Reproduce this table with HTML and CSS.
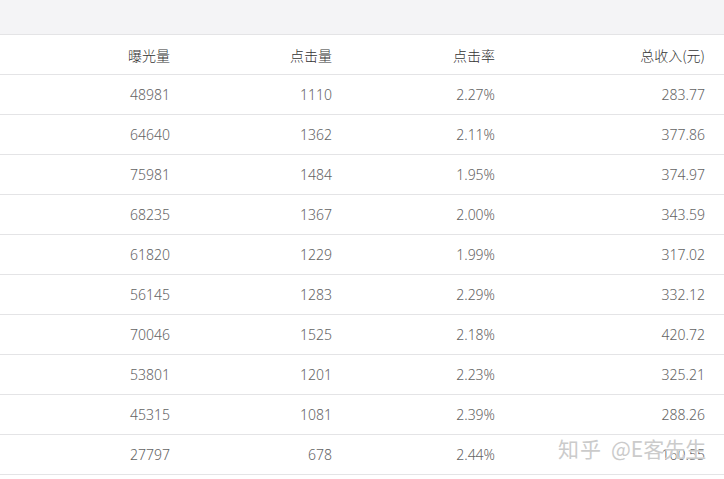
FILE: index.html
```html
<!DOCTYPE html>
<html lang="zh-CN">
<head>
<meta charset="utf-8">
<title>数据表</title>
<link rel="stylesheet" href="styles.css">
</head>
<body>
<div class="page">
  <div class="band"></div>
  <div class="table">
    <div class="row head"><span>曝光量</span><span>点击量</span><span>点击率</span><span>总收入(元)</span></div>
    <div class="row"><span>48981</span><span>1110</span><span>2.27%</span><span>283.77</span></div>
    <div class="row"><span>64640</span><span>1362</span><span>2.11%</span><span>377.86</span></div>
    <div class="row"><span>75981</span><span>1484</span><span>1.95%</span><span>374.97</span></div>
    <div class="row"><span>68235</span><span>1367</span><span>2.00%</span><span>343.59</span></div>
    <div class="row"><span>61820</span><span>1229</span><span>1.99%</span><span>317.02</span></div>
    <div class="row"><span>56145</span><span>1283</span><span>2.29%</span><span>332.12</span></div>
    <div class="row"><span>70046</span><span>1525</span><span>2.18%</span><span>420.72</span></div>
    <div class="row"><span>53801</span><span>1201</span><span>2.23%</span><span>325.21</span></div>
    <div class="row"><span>45315</span><span>1081</span><span>2.39%</span><span>288.26</span></div>
    <div class="row"><span>27797</span><span>678</span><span>2.44%</span><span>160.55</span></div>
  </div>
  <div class="watermark"><span class="wm-logo">知乎</span><span class="wm-user">@E客先生</span></div>
</div>
</body>
</html>
```

FILE: styles.css
```css
html, body {
  margin: 0;
  padding: 0;
  background: #ffffff;
}

.page {
  position: relative;
  width: 724px;
  height: 479px;
  overflow: hidden;
  font-family: "Noto Sans", "Noto Sans CJK SC", sans-serif;
  font-size: 14px;
}

.band {
  height: 34px;
  background: #f4f4f6;
  border-bottom: 1px solid #e4e4e6;
}

.row {
  display: grid;
  grid-template-columns: 170px 162px 163px 210px;
  align-items: center;
  height: 39px;
  border-bottom: 1px solid #e4e4e6;
  color: #636363;
  font-weight: 300;
}

.row span {
  text-align: right;
  white-space: nowrap;
}

.head {
  color: #333333;
  font-family: "Noto Sans CJK SC", sans-serif;
}

.watermark {
  position: absolute;
  left: 558px;
  top: 436px;
  display: flex;
  gap: 9px;
  font-family: "Noto Sans CJK SC", sans-serif;
  font-size: 21px;
  line-height: 24px;
  color: #cbcbcb;
  white-space: nowrap;
  text-shadow: 0 0 1px #ffffff;
}

.wm-logo {
  letter-spacing: 1px;
}
```
